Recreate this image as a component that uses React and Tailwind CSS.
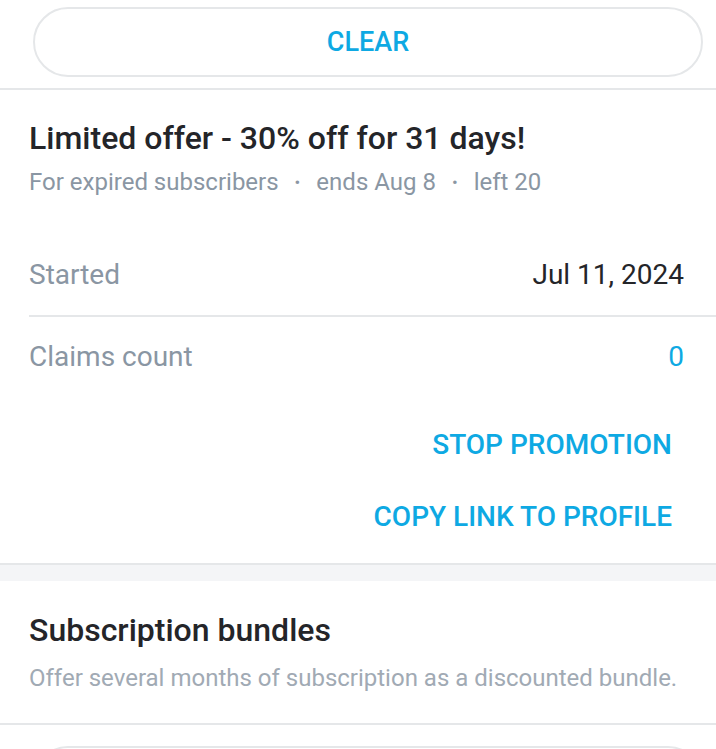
export default function App() {
  const font = { fontFamily: 'Roboto, "Noto Sans", sans-serif' };

  return (
    <div style={font} className="w-[716px] h-[749px] overflow-hidden bg-white text-[#242529]">
      <div className="pl-[33px] pr-[13px] pt-[7px] pb-[11px] border-b-2 border-[#e5e7e9]">
        <button className="w-full h-[70px] rounded-full border-2 border-[#e5e7e9] text-[27px] font-medium text-[#0ea9e3]">
          CLEAR
        </button>
      </div>

      <div className="border-b-2 border-[#e5e7e9]">
        <div className="px-[29px] pt-[29px]">
          <h2 className="text-[32px] leading-[38px] font-medium">Limited offer - 30% off for 31 days!</h2>
          <div className="mt-[10px] flex items-center text-[24px] leading-[30px] text-[#8a96a3]">
            <span>For expired subscribers</span>
            <span className="mx-[16px] text-[17px]">•</span>
            <span>ends Aug 8</span>
            <span className="mx-[16px] text-[17px]">•</span>
            <span>left 20</span>
          </div>
        </div>

        <div className="pl-[29px] mt-[37px]">
          <div className="h-[83px] flex items-center justify-between pr-[32px] border-b-2 border-[#e5e7e9] text-[28px]">
            <span className="text-[#8a96a3]">Started</span>
            <span>Jul 11, 2024</span>
          </div>
          <div className="h-[80px] flex items-center justify-between pr-[32px] text-[28px]">
            <span className="text-[#8a96a3]">Claims count</span>
            <span className="text-[#0ea9e3]">0</span>
          </div>
        </div>

        <div className="mt-[12px] flex flex-col items-end pr-[44px] pb-[10px]">
          <button className="h-[72px] flex items-center text-[28px] font-medium text-[#0ea9e3]">STOP PROMOTION</button>
          <button className="h-[72px] flex items-center text-[28px] font-medium text-[#0ea9e3]">COPY LINK TO PROFILE</button>
        </div>
      </div>

      <div className="h-[16px] bg-[#f4f5f7]" />

      <div className="px-[29px] pt-[30px] pb-[28px] border-b-2 border-[#e5e7e9]">
        <h2 className="text-[32px] leading-[38px] font-medium">Subscription bundles</h2>
        <p className="mt-[12px] text-[24px] leading-[34px] text-[#a1aab4]">
          Offer several months of subscription as a discounted bundle.
        </p>
      </div>

      <div className="pl-[33px] pr-[13px] pt-[21px]">
        <div className="h-[70px] rounded-full border-2 border-[#e5e7e9]" />
      </div>
    </div>
  );
}
